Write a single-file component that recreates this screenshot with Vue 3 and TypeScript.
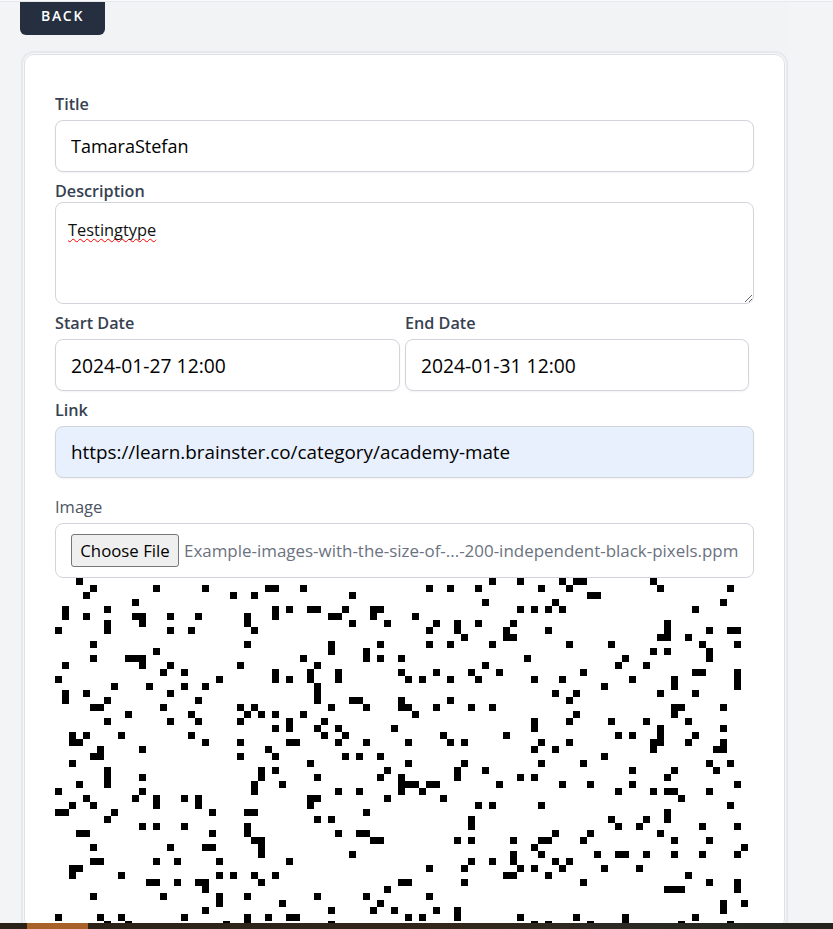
<template>
  <div class="page">
    <div class="top-line"></div>
    <div class="inner">
      <button class="back-button" type="button">BACK</button>
      <div class="card">
        <form class="form" @submit.prevent>
          <div class="field first">
            <label>Title</label>
            <input class="text-input" type="text" value="TamaraStefan" />
          </div>
          <div class="field">
            <label class="tight">Description</label>
            <div class="text-area"><span class="misspelled">Testingtype</span></div>
          </div>
          <div class="date-row">
            <div class="field">
              <label>Start Date</label>
              <input class="text-input date" type="text" value="2024-01-27 12:00" />
            </div>
            <div class="field">
              <label>End Date</label>
              <input class="text-input date" type="text" value="2024-01-31 12:00" />
            </div>
          </div>
          <div class="field">
            <label>Link</label>
            <input class="text-input autofilled" type="text" value="https://learn.brainster.co/category/academy-mate" />
          </div>
          <div class="field image-field">
            <label class="plain">Image</label>
            <div class="file-input">
              <button class="file-button" type="button">Choose File</button>
              <span class="file-name">Example-images-with-the-size-of-...-200-independent-black-pixels.ppm</span>
            </div>
          </div>
          <svg class="preview" width="700" height="350" viewBox="0 0 100 50" shape-rendering="crispEdges">
            <rect v-for="cell in cells" :key="cell.key" :x="cell.x" :y="cell.y" width="1" height="1" fill="#000" />
          </svg>
        </form>
      </div>
    </div>
    <div class="taskbar"><div class="taskbar-active"></div></div>
  </div>
</template>

<script setup lang="ts">
import { computed } from 'vue';

// black pixels of the preview picture, one list of columns per row
const rows: number[][] = [
  [3, 62, 66, 72, 74, 75, 85],
  [5, 14, 21, 30, 31, 35, 53, 56, 60, 69, 73, 86, 96],
  [4, 25, 28, 42, 76, 77],
  [11, 61, 71, 95],
  [1, 7, 31, 33, 36, 37, 41, 45, 46, 66, 68, 70, 72, 91],
  [1, 4, 11, 12, 16, 20, 27, 31, 39, 40, 45, 51],
  [7, 12, 27, 42, 47, 54, 57, 60, 65, 87],
  [0, 7, 16, 19, 28, 53, 57, 64, 70, 87, 93, 96, 97],
  [58, 64, 65, 86, 87, 90],
  [5, 27, 39, 46, 53, 56, 62, 73, 79, 92, 97],
  [14, 39, 44, 85, 87, 93],
  [5, 10, 11, 12, 35, 44, 46, 49, 67, 81, 93],
  [1, 12, 16, 26, 37, 61, 80, 84],
  [15, 18, 31, 36, 40, 49, 54, 59, 63, 75, 91, 92, 97],
  [0, 23, 31, 33, 36, 40, 50, 52, 56, 60, 68, 72, 82, 88, 97],
  [8, 13, 18, 21, 37, 78, 88, 97],
  [1, 4, 16, 37, 71, 74, 86, 91],
  [1, 7, 20, 37, 42, 43, 49, 56, 73],
  [5, 6, 15, 26, 28, 39, 44, 49, 50, 54, 59, 62, 88, 89, 95],
  [10, 19, 27, 29, 31, 35, 51, 74, 88],
  [7, 16, 20, 26, 33, 38, 68, 73, 79, 84, 90],
  [31, 33, 37, 40, 48, 68, 86, 95],
  [2, 4, 9, 19, 38, 41, 55, 64, 80, 82, 86, 91],
  [2, 3, 21, 26, 33, 34, 40, 44, 50, 56, 58, 69, 73, 85, 86, 90, 95],
  [6, 12, 30, 68, 71, 85, 94, 95],
  [5, 6, 26, 31, 41, 43, 46, 78],
  [2, 36, 50, 58, 69, 75, 93, 96],
  [7, 29, 31, 47, 57, 61, 82, 88, 94],
  [7, 12, 29, 37, 46, 49, 57, 66, 68, 87],
  [3, 7, 28, 32, 49, 50, 51, 53, 54, 63, 72, 76, 82, 97],
  [0, 12, 28, 40, 43, 49, 52, 80, 85, 87, 88, 93],
  [4, 11, 14, 18, 20, 36, 37, 47, 55, 89],
  [2, 5, 14, 20, 36, 60, 62, 69, 96],
  [0, 1, 8, 22, 27, 28, 44, 87],
  [7, 37, 39, 59, 79, 84, 87],
  [12, 14, 18, 27, 59, 80, 83, 92, 97],
  [3, 4, 22, 27, 40, 43, 44, 71, 76, 86],
  [28, 29, 45, 46, 57, 59, 65, 69, 70, 75, 88, 93],
  [5, 16, 21, 22, 29, 68, 98],
  [29, 42, 65, 69, 77, 80, 81, 84, 88, 92, 97],
  [5, 6, 14, 17, 23, 33, 59, 62, 65, 71, 73],
  [2, 3, 53, 58, 66, 68, 72, 78, 83],
  [2, 9, 23, 25, 28, 31, 64, 65, 70, 90],
  [13, 14, 17, 20, 21, 29, 49, 50, 58, 75, 93, 97],
  [21, 47, 87, 88, 89, 97],
  [5, 15, 23, 27, 37, 44, 53],
  [23, 32, 46, 95, 98],
  [21, 39, 45, 48, 54, 57, 95],
  [0, 6, 9, 18, 27, 30, 33, 34, 50, 52, 57, 66, 74, 81, 91],
  [7, 10, 24, 27, 39, 68, 70, 76, 81, 89, 96],
];

const cells = computed(() =>
  rows.flatMap((cols, y) => cols.map((x) => ({ key: `${x}-${y}`, x, y }))),
);
</script>

<style>
html, body { overflow: hidden; background: #f3f4f6; }
</style>

<style scoped>
.page {
  height: 929px;
  overflow: hidden;
  background: #f3f4f6;
  font-family: "Open Sans", "Liberation Sans", sans-serif;
  border-top: 1px solid #f9fafb;
  box-sizing: border-box;
}
.top-line { height: 1px; background: #e5e7eb; }
.inner {
  margin-left: 20px;
  width: 769px;
  background: #f2f3f5;
}
.back-button {
  display: block;
  width: 85px;
  height: 33px;
  padding: 0 0 6px;
  border: none;
  border-radius: 0 0 6px 6px;
  background: #252f3f;
  color: #fff;
  font-family: inherit;
  font-size: 14px;
  font-weight: 600;
  letter-spacing: 1.7px;
}
.card {
  margin: 19px 0 0 4px;
  width: 761px;
  box-sizing: border-box;
  background: #fff;
  border: 1px solid #dfe1e6;
  border-radius: 10px;
  box-shadow: 0 0 0 1px #f6f7f8, 0 0 0 3px #e6e8eb;
}
.form { padding: 38px 0 0 30px; }
.field { margin-top: 8px; }
.field.first { margin-top: 0; }
.field.image-field { margin-top: 18px; }
label {
  display: block;
  margin-bottom: 5px;
  font-size: 16.2px;
  line-height: 22px;
  font-weight: 600;
  color: #374151;
}
label.tight { margin-bottom: 0; }
label.plain { font-size: 16.5px; font-weight: 400; color: #4b5563; }
.text-input {
  display: block;
  width: 100%;
  height: 52px;
  box-sizing: border-box;
  padding: 0 15px;
  border: 1px solid #d1d5db;
  border-radius: 8px;
  background: #fff;
  color: #000;
  font-family: inherit;
  font-size: 18px;
  box-shadow: 0 1px 2px rgba(0, 0, 0, 0.05);
  outline: none;
}
.text-input.date { font-size: 19.3px; }
.text-input.autofilled { background: #e8f0fe; font-size: 18.85px; }
.field, .file-input { width: 699px; }
.date-row .field { width: auto; }
.text-area {
  height: 102px;
  box-sizing: border-box;
  padding: 15px 12px;
  border: 1px solid #d1d5db;
  border-radius: 8px;
  background: #fff;
  color: #111;
  font-size: 16.4px;
  line-height: 24px;
  overflow: auto;
  resize: vertical;
}
.misspelled {
  text-decoration: underline wavy #f00 1.2px;
  text-decoration-skip-ink: none;
  text-underline-offset: 2px;
}
.date-row {
  display: grid;
  grid-template-columns: 345px 344px;
  column-gap: 5px;
}
.file-input {
  display: flex;
  align-items: center;
  gap: 5px;
  height: 55px;
  box-sizing: border-box;
  padding: 0 15px;
  border: 1px solid #d1d5db;
  border-radius: 8px;
  background: #fff;
}
.file-button {
  flex: none;
  width: 108px;
  height: 33px;
  padding: 0;
  border: 1px solid #767676;
  border-radius: 3px;
  background: #efefef;
  color: #000;
  font-family: inherit;
  font-size: 16.8px;
}
.file-name {
  color: #6b7280;
  font-size: 16.95px;
  white-space: nowrap;
}
.preview { display: block; }
.taskbar {
  position: fixed;
  left: 0;
  right: 0;
  bottom: 0;
  height: 6px;
  background: linear-gradient(90deg, #2a2118 0%, #33271b 55%, #2b2a25 75%, #24241f 100%);
}
.taskbar-active {
  margin-left: 27px;
  width: 61px;
  height: 100%;
  background: #a9612a;
}
</style>
